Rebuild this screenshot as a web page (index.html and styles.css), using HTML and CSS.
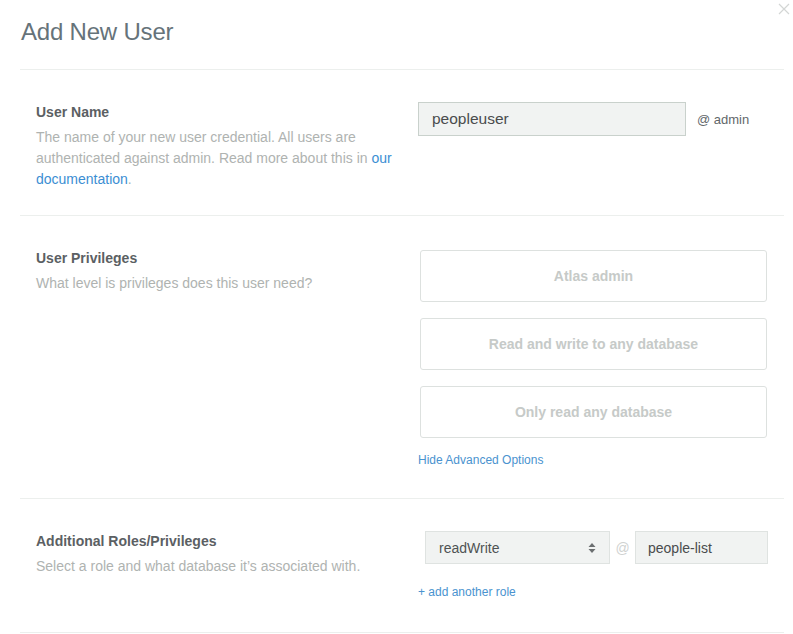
FILE: index.html
```html
<!DOCTYPE html>
<html>
<head>
<meta charset="utf-8">
<link rel="stylesheet" href="styles.css">
</head>
<body>
<div class="modal">
  <button class="close" aria-label="Close">
    <svg width="12" height="12" viewBox="0 0 12 12"><path d="M1 1L11 11M11 1L1 11" stroke="#d3d6d5" stroke-width="1.2" fill="none"/></svg>
  </button>
  <h1 class="title">Add New User</h1>

  <section class="row row-name">
    <div class="info">
      <h2 class="label">User Name</h2>
      <p class="desc">The name of your new user credential. All users are authenticated against admin. Read more about this in <a class="link" href="#">our documentation</a>.</p>
    </div>
    <div class="control name-control">
      <div class="text-input name-input">peopleuser</div>
      <span class="at-admin">@ admin</span>
    </div>
  </section>

  <section class="row row-priv">
    <div class="info">
      <h2 class="label">User Privileges</h2>
      <p class="desc">What level is privileges does this user need?</p>
    </div>
    <div class="control priv-control">
      <button class="priv-btn">Atlas admin</button>
      <button class="priv-btn">Read and write to any database</button>
      <button class="priv-btn">Only read any database</button>
      <a class="small-link" href="#">Hide Advanced Options</a>
    </div>
  </section>

  <section class="row row-roles">
    <div class="info">
      <h2 class="label">Additional Roles/Privileges</h2>
      <p class="desc">Select a role and what database it’s associated with.</p>
    </div>
    <div class="control roles-control">
      <div class="role-line">
        <div class="select">
          <span>readWrite</span>
          <svg class="arrows" width="8" height="12" viewBox="0 0 8 12"><path d="M4 1L7.5 5H0.5Z M4 11L7.5 7H0.5Z" fill="#6b6f70"/></svg>
        </div>
        <span class="at-sep">@</span>
        <div class="text-input db-input">people-list</div>
      </div>
      <a class="small-link add-role" href="#">+ add another role</a>
    </div>
  </section>
</div>
</body>
</html>
```

FILE: styles.css
```css
* { box-sizing: border-box; }
body {
  margin: 0;
  background: #fff;
  font-family: "Liberation Sans", Arial, sans-serif;
}
.modal {
  position: relative;
  margin-left: 20px;
  width: 764px;
}
.close {
  position: absolute;
  top: 3px;
  right: -6px;
  padding: 0;
  border: 0;
  background: none;
  line-height: 0;
}
.title {
  margin: 0;
  padding: 18px 0 23px 1px;
  font-size: 24px;
  line-height: 28px;
  font-weight: 400;
  color: #66737a;
  letter-spacing: -0.2px;
}
.row {
  display: flex;
  border-top: 1px solid #ecefed;
  padding-top: 32px;
}
.row-name { padding-bottom: 25px; }
.row-priv { padding-bottom: 30px; }
.row-roles { padding-bottom: 32px; border-bottom: 1px solid #ecefed; }
.info {
  width: 362px;
  margin-left: 16px;
  margin-right: 20px;
  flex: none;
}
.label {
  margin: 0 0 4px;
  font-size: 14px;
  line-height: 21px;
  font-weight: 700;
  color: #5b6063;
}
.desc {
  margin: 0;
  font-size: 14px;
  line-height: 21px;
  color: #afb3b1;
}
.link { color: #3b8ed3; text-decoration: none; }
.control { flex: 1; }
.name-control {
  display: flex;
  align-items: center;
  height: 34px;
}
.text-input {
  display: flex;
  align-items: center;
  background: #f1f3f2;
  border: 1px solid #c9d1cc;
  color: #4a4c4d;
}
.name-input {
  width: 268px;
  height: 34px;
  padding-left: 13px;
  font-size: 15.5px;
}
.at-admin {
  margin-left: 11px;
  font-size: 13px;
  color: #62676a;
}
.priv-control {
  display: flex;
  flex-direction: column;
  align-items: flex-start;
  padding-top: 2px;
}
.priv-btn {
  width: 347px;
  height: 52px;
  margin: 0 0 16px 2px;
  background: #fff;
  border: 1px solid #dde1df;
  border-radius: 3px;
  font-family: "Liberation Sans", Arial, sans-serif;
  font-size: 14px;
  font-weight: 700;
  color: #c6cac8;
  padding: 0;
}
.priv-btn:last-of-type { margin-bottom: 14px; }
.small-link {
  font-size: 12px;
  line-height: 16px;
  color: #4a93cf;
  text-decoration: none;
}
.roles-control {
  display: flex;
  flex-direction: column;
  align-items: flex-start;
}
.role-line {
  display: flex;
  align-items: center;
  margin-left: 7px;
  height: 33px;
}
.select {
  width: 185px;
  height: 33px;
  display: flex;
  align-items: center;
  justify-content: space-between;
  padding: 0 13px 0 13px;
  background: #f1f3f2;
  border: 1px solid #dfe3e1;
  font-size: 14px;
  color: #4f5354;
}
.at-sep {
  width: 25px;
  text-align: center;
  font-size: 14px;
  color: #cfd2d1;
}
.db-input {
  width: 133px;
  height: 33px;
  padding-left: 12px;
  font-size: 14px;
  border-color: #dfe3e1;
}
.add-role {
  margin-top: 20px;
  font-size: 12px;
}
```
